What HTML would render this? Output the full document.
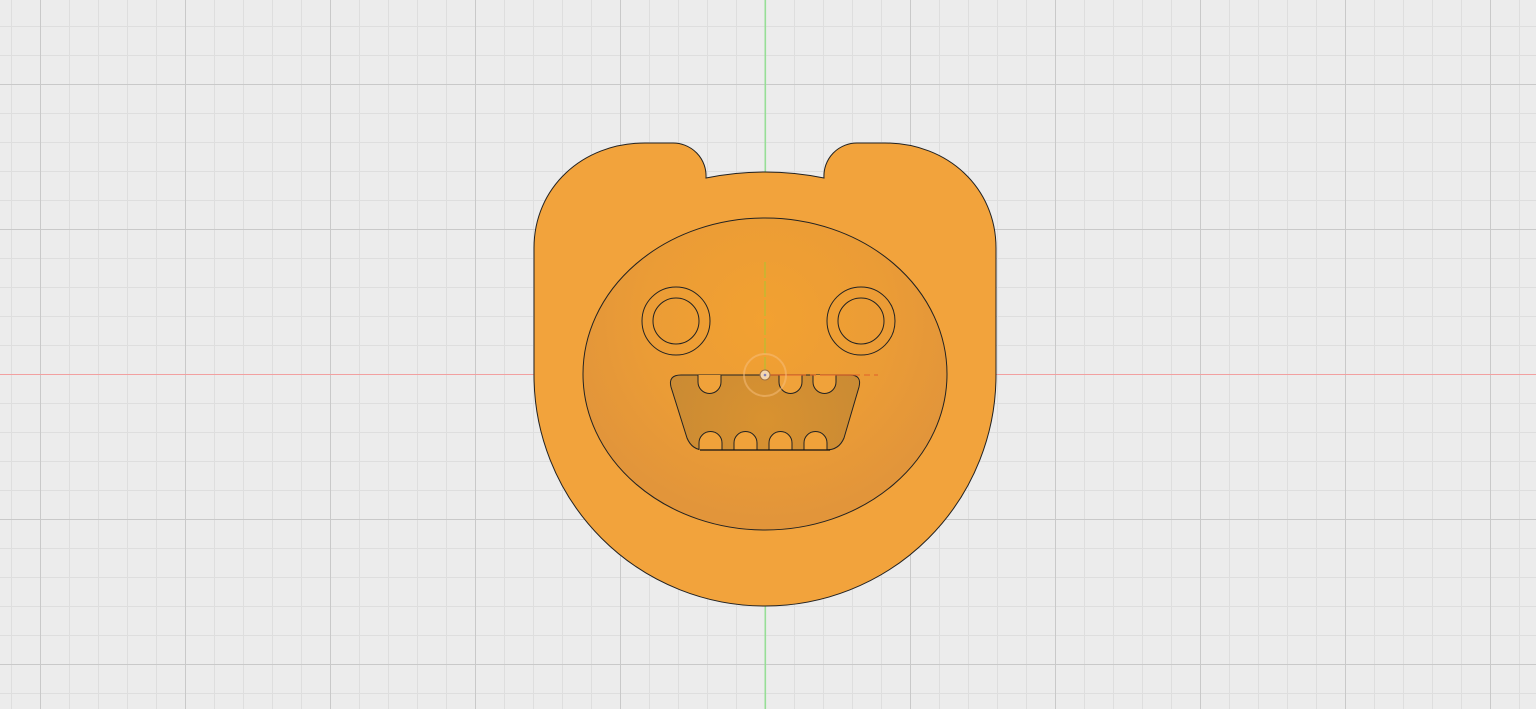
<!DOCTYPE html>
<html><head><meta charset="utf-8"><style>html,body{margin:0;padding:0;background:#ececec;overflow:hidden}svg{display:block}</style></head>
<body>
<svg width="1536" height="709" viewBox="0 0 1536 709" xmlns="http://www.w3.org/2000/svg">
<defs>
<pattern id="minor" x="11" y="26" width="29" height="29" patternUnits="userSpaceOnUse">
<path d="M0.5,0 V29 M0,0.5 H29" stroke="#dedede" stroke-width="1" fill="none"/>
</pattern>
<pattern id="major" x="40" y="84" width="145" height="145" patternUnits="userSpaceOnUse">
<path d="M0.5,0 V145 M0,0.5 H145" stroke="#c9c9c9" stroke-width="1" fill="none"/>
</pattern>
<radialGradient id="face" cx="765" cy="320" r="200" gradientUnits="userSpaceOnUse">
<stop offset="0" stop-color="#f2a131"/>
<stop offset="0.6" stop-color="#eb9c36"/>
<stop offset="1" stop-color="#e2953a"/>
</radialGradient>
<radialGradient id="mouth" cx="765" cy="420" r="110" gradientUnits="userSpaceOnUse">
<stop offset="0" stop-color="#d99230"/>
<stop offset="1" stop-color="#c98a34"/>
</radialGradient>
</defs>
<rect width="1536" height="709" fill="#ececec"/>
<rect width="1536" height="709" fill="url(#minor)"/>
<rect width="1536" height="709" fill="url(#major)"/>
<line x1="0" y1="374.5" x2="1536" y2="374.5" stroke="#f2a0a0" stroke-width="1"/>
<rect x="764.5" y="0" width="1.6" height="709" fill="#96de96"/>
<path d="M534,375 L534,248 C534,188 582,143 645,143 L672,143 A33,33 0 0 1 706,178 Q765,166 824,178 A33,33 0 0 1 858,143 L885,143 C948,143 996,188 996,248 L996,375 A231,231 0 0 1 534,375 Z" fill="#f2a33c" stroke="#222" stroke-width="1"/>
<ellipse cx="765" cy="374" rx="182" ry="156" fill="url(#face)" stroke="#222" stroke-width="1"/>
<circle cx="676" cy="321" r="34" fill="none" stroke="#222" stroke-width="1"/>
<circle cx="676" cy="321" r="23" fill="none" stroke="#222" stroke-width="1"/>
<circle cx="861" cy="321" r="34" fill="none" stroke="#222" stroke-width="1"/>
<circle cx="861" cy="321" r="23" fill="none" stroke="#222" stroke-width="1"/>
<path d="M681,375 L850,375 Q862,375 859,387 L844,438 Q839,450 826,450 L704,450 Q692,450 687,438 L671,387 Q668,375 681,375 Z" fill="url(#mouth)" stroke="#222" stroke-width="1"/>
<g fill="#f0a23a" stroke="#222" stroke-width="1">
<path d="M698,375 V382 A11.5,11.5 0 0 0 721,382 V375"/>
<path d="M779,375 V382 A11.5,11.5 0 0 0 802,382 V375"/>
<path d="M813,375 V382 A11.5,11.5 0 0 0 836,382 V375"/>
<path d="M699,450 V443 A11.5,11.5 0 0 1 722,443 V450"/>
<path d="M734,450 V443 A11.5,11.5 0 0 1 757,443 V450"/>
<path d="M769,450 V443 A11.5,11.5 0 0 1 792,443 V450"/>
<path d="M804,450 V443 A11.5,11.5 0 0 1 827,443 V450"/>
</g>
<line x1="700" y1="450" x2="830" y2="450" stroke="#111" stroke-width="1.2"/>
<line x1="765" y1="262" x2="765" y2="374" stroke="#a8c830" stroke-width="1.2" stroke-dasharray="16,3" opacity="0.8"/>
<line x1="766" y1="375" x2="878" y2="375" stroke="#e0602a" stroke-width="1.2" stroke-dasharray="40,4,6,4" opacity="0.8"/>
<circle cx="765" cy="375" r="21" fill="none" stroke="#f7c080" stroke-width="2" opacity="0.5"/>
<circle cx="765" cy="375" r="5" fill="#f4d6b0" stroke="#a07040" stroke-width="1"/>
<circle cx="765" cy="375" r="1.3" fill="#8080c0"/>
</svg>
</body></html>
